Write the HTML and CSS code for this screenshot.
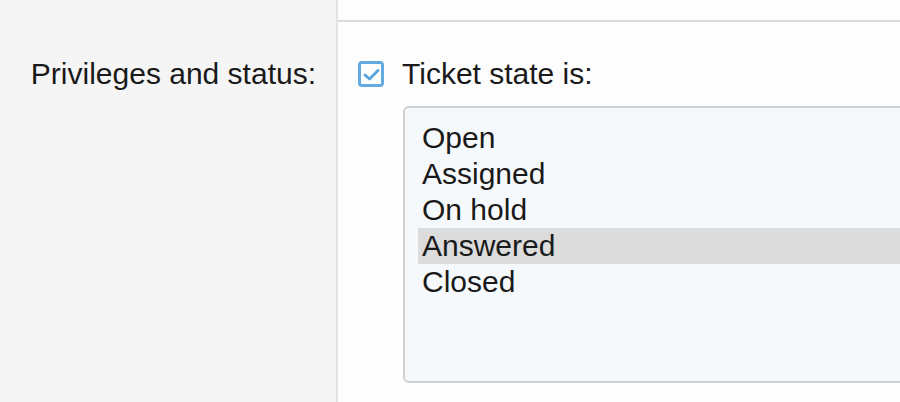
FILE: index.html
```html
<!DOCTYPE html>
<html>
<head>
    <title>Filter</title>
    <link rel="stylesheet" href="styles.css">
</head>
<body>
    <div class="layout">
        <div class="side">
            <div class="side-label">Privileges and status:</div>
        </div>
        <div class="main">
            <div class="topbar"></div>
            <div class="field">
                <label class="check-row">
                    <span class="checkbox">
                        <svg width="17" height="13" viewBox="0 0 17 13">
                            <path d="M2 7 L6.5 11 L15 2.5" fill="none" stroke="#5aa6dc" stroke-width="3" stroke-linecap="round" stroke-linejoin="round"/>
                        </svg>
                    </span>
                    Ticket state is:
                </label>
                <div class="listbox">
                    <div class="option">Open</div>
                    <div class="option">Assigned</div>
                    <div class="option">On hold</div>
                    <div class="option selected">Answered</div>
                    <div class="option">Closed</div>
                </div>
            </div>
        </div>
    </div>
</body>
</html>
```

FILE: styles.css
```css
body {
    margin: 0;
    font-family: "Liberation Sans", Arial, sans-serif;
    font-size: 30px;
    color: #1a1a1a;
    background: #fdfdfd;
    overflow: hidden;
}
.layout {
    display: flex;
    height: 402px;
}
.side {
    width: 336px;
    flex-shrink: 0;
    background: #f5f5f5;
    border-right: 2px solid #e2e2e2;
}
.side-label {
    padding: 56px 20px 0 0;
    line-height: 36px;
    text-align: right;
}
.main {
    flex: 1;
    overflow: hidden;
}
.topbar {
    height: 20px;
    border-bottom: 2px solid #dcdcdc;
}
.field {
    padding: 34px 0 0 20px;
}
.check-row {
    display: flex;
    align-items: center;
    line-height: 36px;
}
.checkbox {
    box-sizing: border-box;
    width: 26px;
    height: 26px;
    margin: 0 18px 0 0;
    border: 3px solid #62aadf;
    border-radius: 4px;
    background: #fff;
    display: flex;
    align-items: center;
    justify-content: center;
}
.listbox {
    margin: 14px 0 0 45px;
    width: 640px;
    height: 277px;
    box-sizing: border-box;
    padding: 12px 0 0 13px;
    border: 2px solid #d0d0d0;
    border-radius: 6px;
    background: #f6f9fb;
}
.option {
    line-height: 36px;
    padding-left: 4px;
}
.option.selected {
    background: #dcdcdc;
}
```
